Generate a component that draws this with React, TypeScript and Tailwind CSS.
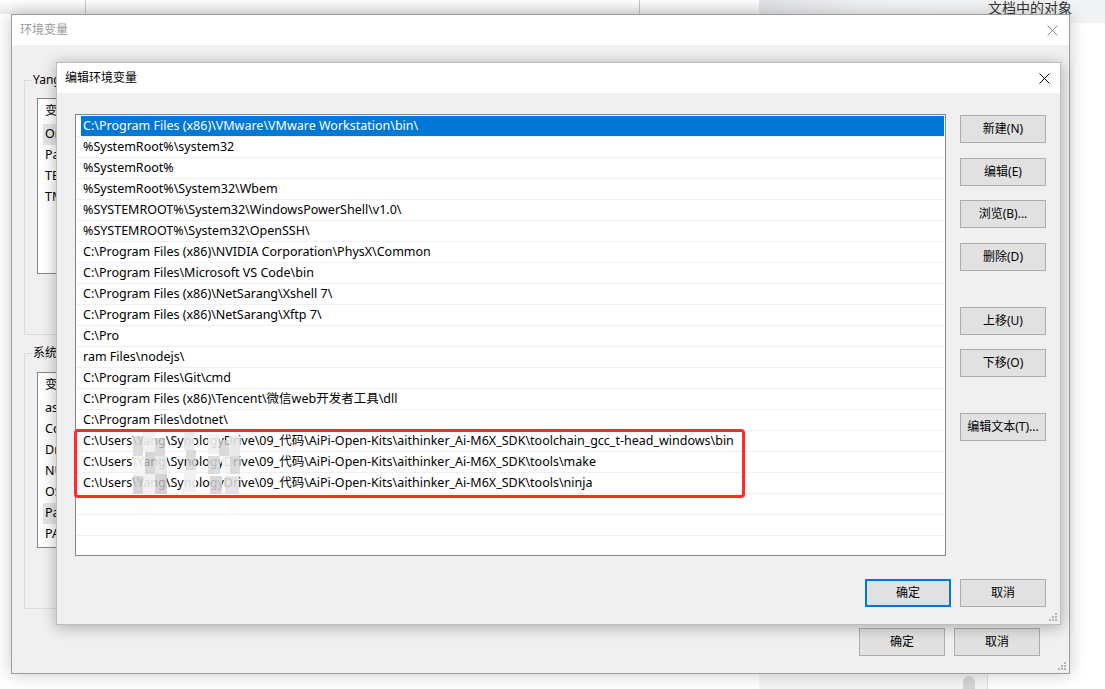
import React from "react";

const paths: string[] = [
  "C:\\Program Files (x86)\\VMware\\VMware Workstation\\bin\\",
  "%SystemRoot%\\system32",
  "%SystemRoot%",
  "%SystemRoot%\\System32\\Wbem",
  "%SYSTEMROOT%\\System32\\WindowsPowerShell\\v1.0\\",
  "%SYSTEMROOT%\\System32\\OpenSSH\\",
  "C:\\Program Files (x86)\\NVIDIA Corporation\\PhysX\\Common",
  "C:\\Program Files\\Microsoft VS Code\\bin",
  "C:\\Program Files (x86)\\NetSarang\\Xshell 7\\",
  "C:\\Program Files (x86)\\NetSarang\\Xftp 7\\",
  "C:\\Pro",
  "ram Files\\nodejs\\",
  "C:\\Program Files\\Git\\cmd",
  "C:\\Program Files (x86)\\Tencent\\微信web开发者工具\\dll",
  "C:\\Program Files\\dotnet\\",
  "C:\\Users\\Yang\\SynologyDrive\\09_代码\\AiPi-Open-Kits\\aithinker_Ai-M6X_SDK\\toolchain_gcc_t-head_windows\\bin",
  "C:\\Users\\Yang\\SynologyDrive\\09_代码\\AiPi-Open-Kits\\aithinker_Ai-M6X_SDK\\tools\\make",
  "C:\\Users\\Yang\\SynologyDrive\\09_代码\\AiPi-Open-Kits\\aithinker_Ai-M6X_SDK\\tools\\ninja",
  "",
  "",
  "",
];

const mosaic: [number, number, number, number, string][] = [
  [133, 436, 10, 20, "rgba(215,215,215,0.85)"],
  [143, 430, 12, 22, "rgba(240,240,240,0.9)"],
  [155, 438, 10, 18, "rgba(210,210,210,0.8)"],
  [133, 456, 12, 20, "rgba(244,244,244,0.9)"],
  [145, 452, 10, 22, "rgba(200,200,200,0.75)"],
  [155, 456, 12, 18, "rgba(230,230,230,0.9)"],
  [133, 476, 10, 18, "rgba(205,205,205,0.85)"],
  [143, 474, 12, 20, "rgba(240,240,240,0.9)"],
  [155, 474, 12, 20, "rgba(200,200,200,0.8)"],
  [137, 494, 14, 20, "rgba(252,252,252,0.9)"],
  [184, 430, 10, 20, "rgba(232,232,232,0.9)"],
  [186, 450, 10, 20, "rgba(210,210,210,0.8)"],
  [184, 470, 12, 22, "rgba(240,240,240,0.9)"],
  [208, 434, 11, 20, "rgba(240,240,240,0.9)"],
  [219, 440, 10, 16, "rgba(210,210,210,0.8)"],
  [229, 436, 11, 20, "rgba(232,232,232,0.9)"],
  [208, 456, 12, 18, "rgba(215,215,215,0.85)"],
  [222, 456, 10, 18, "rgba(244,244,244,0.9)"],
  [230, 456, 10, 18, "rgba(210,210,210,0.8)"],
  [210, 476, 12, 18, "rgba(210,210,210,0.85)"],
  [225, 476, 14, 18, "rgba(222,222,222,0.85)"],
  [228, 496, 12, 18, "rgba(252,252,252,0.9)"],
];

function CloseX({ color }: { color: string }) {
  return (
    <svg width="11" height="11" viewBox="0 0 11 11">
      <path d="M0.5 0.5 L10.5 10.5 M10.5 0.5 L0.5 10.5" stroke={color} strokeWidth="1" fill="none" />
    </svg>
  );
}

function Grip() {
  return (
    <svg width="8" height="8" viewBox="0 0 8 8">
      <rect x="6" y="0" width="2" height="2" fill="#b4b4b4" />
      <rect x="3" y="3" width="2" height="2" fill="#b4b4b4" />
      <rect x="6" y="3" width="2" height="2" fill="#b4b4b4" />
      <rect x="0" y="6" width="2" height="2" fill="#b4b4b4" />
      <rect x="3" y="6" width="2" height="2" fill="#b4b4b4" />
      <rect x="6" y="6" width="2" height="2" fill="#b4b4b4" />
    </svg>
  );
}

function Btn({ label, primary }: { label: string; primary?: boolean }) {
  return (
    <div
      className={
        primary
          ? "w-[86px] h-[28px] bg-[#e1e1e1] border-2 border-[#0078d7] flex items-center justify-center"
          : "w-[86px] h-[28px] bg-[#e1e1e1] border border-[#adadad] flex items-center justify-center"
      }
    >
      {label}
    </div>
  );
}

function PathRow({ text, selected }: { text: string; selected?: boolean }) {
  return (
    <div className="h-[21px] border-b border-[#f0f0f0] flex text-[12.5px]">
      {selected ? (
        <div className="ml-[4px] flex-1 bg-[#0078d7] text-white flex items-center pt-[1px] pl-[2px] whitespace-nowrap">{text}</div>
      ) : (
        <div className="flex-1 flex items-center pt-[1px] pl-[6px] whitespace-nowrap">{text}</div>
      )}
    </div>
  );
}

function VarList({ header, rows, hl }: { header: string; rows: string[]; hl: number }) {
  return (
    <div className="h-[176px] border border-[#828790] bg-white overflow-hidden text-[12.5px]">
      <div className="h-[25px] flex items-center pl-[7px] gap-[120px]">
        <span>{header}</span>
        <span>值</span>
      </div>
      {rows.map((r, i) => (
        <div
          key={i}
          className={
            i === hl
              ? "h-[21px] ml-[5px] pl-[2px] bg-[#e5e5e5] flex items-center whitespace-nowrap"
              : "h-[21px] ml-[5px] pl-[2px] flex items-center whitespace-nowrap"
          }
        >
          {r}
        </div>
      ))}
    </div>
  );
}

export default function App() {
  return (
    <div className="relative w-[1105px] h-[689px] overflow-hidden bg-white text-[12px] text-black font-['Noto_Sans','Noto_Sans_CJK_SC',sans-serif]">
      {/* background application */}
      <div className="flex h-[23px]">
        <div className="flex h-[14px] w-[759px] bg-gradient-to-b from-[#ffffff] to-[#ebebeb]">
          <div className="w-[86px] border-r border-[#c4c4c4]" />
          <div className="w-[554px] border-r border-[#c4c4c4]" />
          <div className="flex-1" />
        </div>
        <div className="w-[217px] h-[14px] bg-gradient-to-r from-[#dfe1e4] via-[#f1f2f4] to-[#f3f4f6]" />
        <div className="flex-1 bg-[#f2f3f5] pl-[12px] text-[14px] leading-[15px] text-[#333] whitespace-nowrap font-['Noto_Sans_CJK_SC',sans-serif]">文档中的对象</div>
      </div>
      <div className="absolute left-[759px] top-[673px] w-[229px] h-[16px] bg-[#f4f4f4] border-r border-[#e0e0e0] flex justify-end pr-[12px]">
        <div className="w-[12px] h-[16px] mt-[3px] rounded-t-[6px] bg-[#d4d4d4]" />
      </div>

      {/* outer dialog: 环境变量 */}
      <div className="absolute left-[11px] top-[14px] w-[1059px] h-[660px] border border-[#9c9c9c] bg-[#f0f0f0] shadow-[0_0_16px_rgba(0,0,0,0.22)] flex flex-col">
        <div className="h-[30px] bg-white flex items-center justify-between pl-[8px] pr-[11px] text-[#9a9a9a]">
          <span>环境变量</span>
          <CloseX color="#8a8a8a" />
        </div>
        <div className="flex-1 flex flex-col px-[12px]">
          <fieldset className="mt-[27px] h-[263px] border border-[#dcdcdc] px-[12px]">
            <legend className="-ml-[5px] px-[1px] leading-[16px]">Yang的用户变量(U)</legend>
            <div className="mt-[10px]">
              <VarList header="变量" rows={["OneDrive", "Path", "TEMP", "TMP"]} hl={0} />
            </div>
          </fieldset>
          <fieldset className="mt-[10px] h-[264px] border border-[#dcdcdc] px-[12px]">
            <legend className="-ml-[5px] px-[1px] leading-[16px]">系统变量(S)</legend>
            <div className="mt-[11px]">
              <VarList
                header="变量"
                rows={["asl.log", "ComSpec", "DriverData", "NUMBER_OF_PROCESSORS", "OS", "Path", "PATHEXT"]}
                hl={5}
              />
            </div>
          </fieldset>
          <div className="mt-[19px] flex justify-end gap-[9px] pr-[17px]">
            <Btn label="确定" />
            <Btn label="取消" />
          </div>
        </div>
        <div className="absolute right-[3px] bottom-[3px]">
          <Grip />
        </div>
      </div>

      {/* inner dialog: 编辑环境变量 */}
      <div className="absolute left-[56px] top-[62px] w-[1005px] h-[563px] border border-[#bdbdbd] bg-[#f0f0f0] shadow-[0_2px_14px_rgba(0,0,0,0.3)] flex flex-col">
        <div className="h-[30px] bg-white flex items-center justify-between pl-[8px] pr-[10px]">
          <span>编辑环境变量</span>
          <CloseX color="#000" />
        </div>
        <div className="relative flex-1 flex flex-col pl-[18px] pr-[14px] pt-[21px]">
          <div className="flex">
            <div className="w-[871px] h-[442px] border border-[#828790] bg-white px-[1px] pt-[1px] overflow-hidden">
              {paths.map((p, i) => (
                <PathRow key={i} text={p} selected={i === 0} />
              ))}
            </div>
            <div className="ml-[14px] mt-[1px] flex flex-col">
              <Btn label="新建(N)" />
              <div className="mt-[15px]"><Btn label="编辑(E)" /></div>
              <div className="mt-[14px]"><Btn label="浏览(B)..." /></div>
              <div className="mt-[15px]"><Btn label="删除(D)" /></div>
              <div className="mt-[36px]"><Btn label="上移(U)" /></div>
              <div className="mt-[14px]"><Btn label="下移(O)" /></div>
              <div className="mt-[36px]"><Btn label="编辑文本(T)..." /></div>
            </div>
          </div>
          <div className="mt-[23px] flex justify-end gap-[9px]">
            <Btn label="确定" primary />
            <Btn label="取消" />
          </div>
        </div>
        <div className="absolute right-[3px] bottom-[3px]">
          <Grip />
        </div>
      </div>

      {/* mosaic over the user name */}
      {mosaic.map(([x, y, w, h, c], i) => (
        <div key={i} className="absolute" style={{ left: x, top: y, width: w, height: h, background: c }} />
      ))}

      {/* red annotation */}
      <div className="absolute left-[74px] top-[429px] w-[671px] h-[69px] border-[3px] border-[#ff2b2b] rounded-[4px]" />
    </div>
  );
}
